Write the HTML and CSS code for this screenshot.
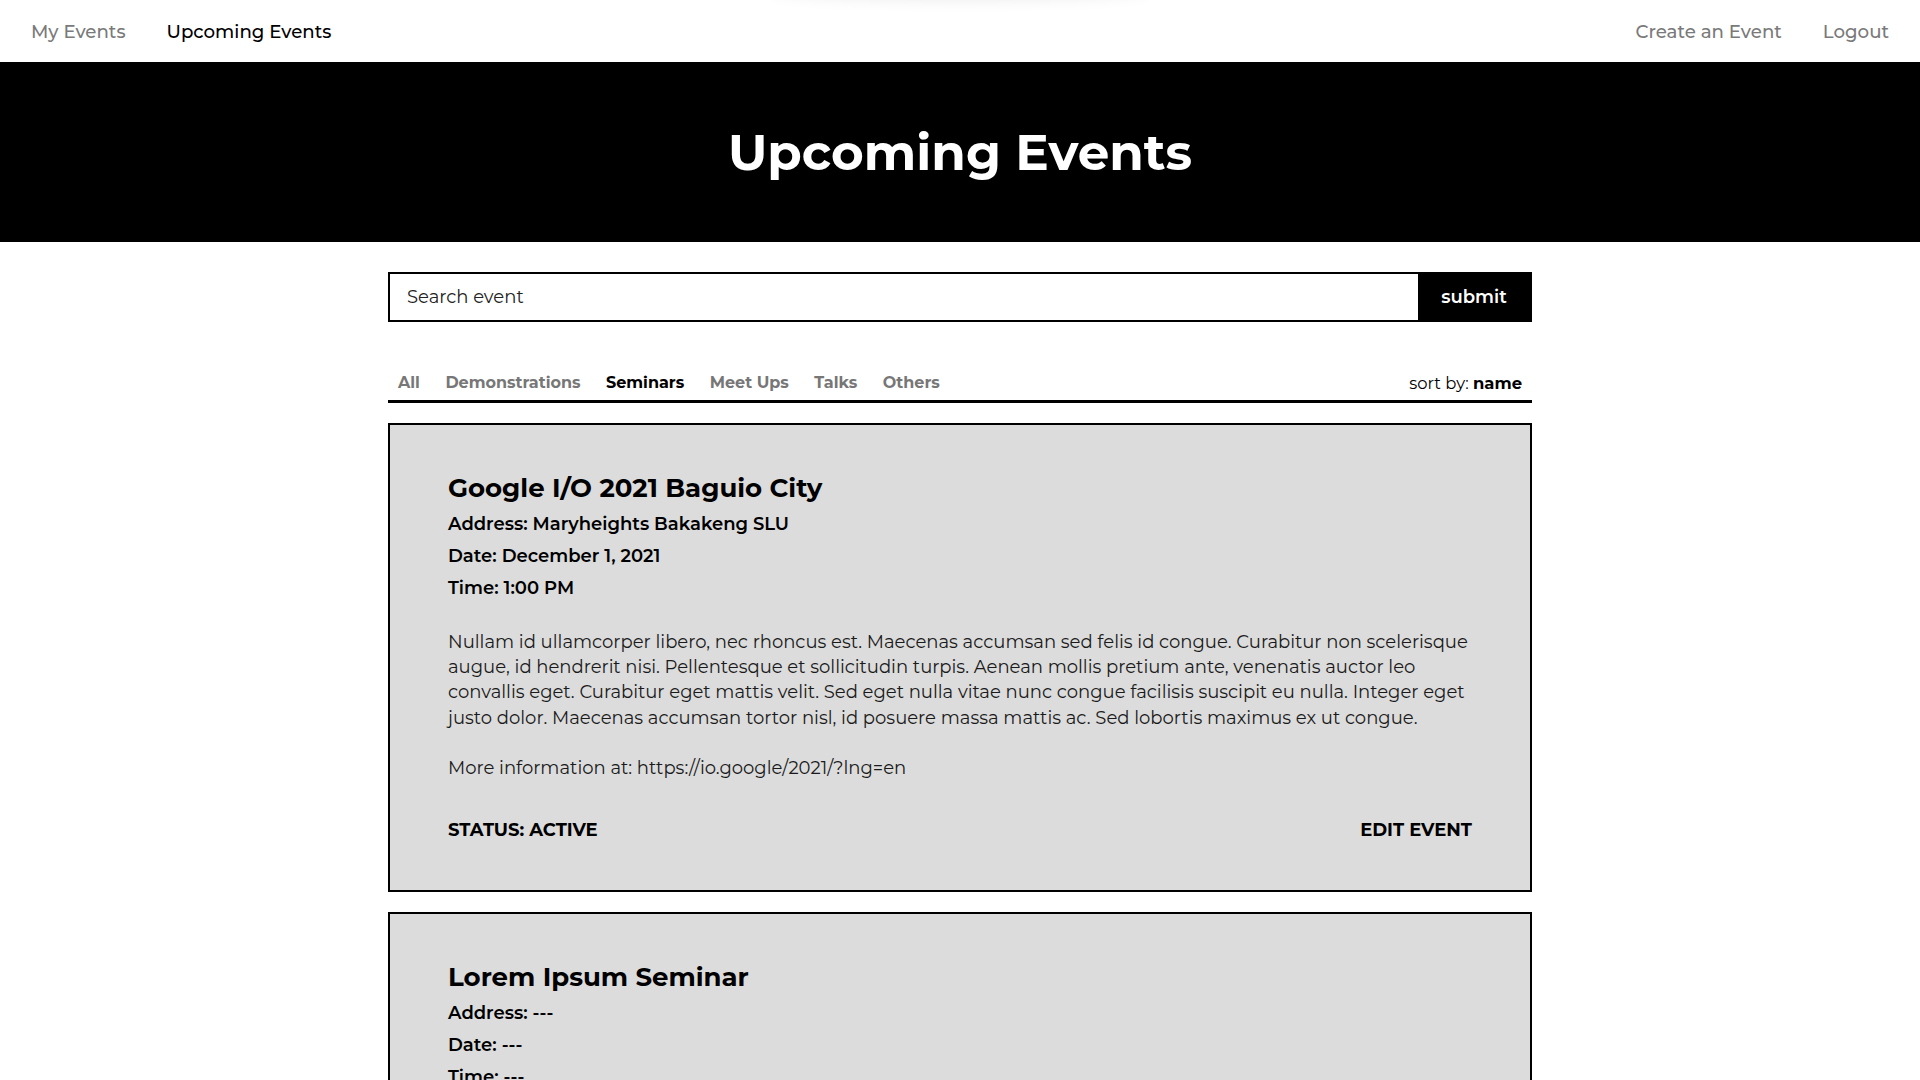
FILE: index.html
```html
<!DOCTYPE html>
<html lang="en">
<head>
<meta charset="utf-8">
<title>Upcoming Events</title>
<link rel="stylesheet" href="styles.css">
</head>
<body>
<header class="topnav">
  <div class="topnav-shadow"></div>
  <nav class="nav-group">
    <a class="nav-link" href="#">My Events</a>
    <a class="nav-link active" href="#">Upcoming Events</a>
  </nav>
  <nav class="nav-group">
    <a class="nav-link" href="#">Create an Event</a>
    <a class="nav-link" href="#">Logout</a>
  </nav>
</header>

<section class="hero">
  <h1 class="hero-title">Upcoming Events</h1>
</section>

<main class="container">
  <form class="search">
    <input class="search-input" type="text" placeholder="Search event">
    <button class="search-btn" type="button">submit</button>
  </form>

  <div class="filter-bar">
    <ul class="tabs">
      <li class="tab">All</li>
      <li class="tab">Demonstrations</li>
      <li class="tab active">Seminars</li>
      <li class="tab">Meet Ups</li>
      <li class="tab">Talks</li>
      <li class="tab">Others</li>
    </ul>
    <div class="sort">sort by: <strong>name</strong></div>
  </div>

  <article class="card">
    <h2 class="card-title">Google I/O 2021 Baguio City</h2>
    <p class="card-meta">Address: Maryheights Bakakeng SLU</p>
    <p class="card-meta">Date: December 1, 2021</p>
    <p class="card-meta">Time: 1:00 PM</p>
    <p class="card-desc">Nullam id ullamcorper libero, nec rhoncus est. Maecenas accumsan sed felis id congue. Curabitur non scelerisque augue, id hendrerit nisi. Pellentesque et sollicitudin turpis. Aenean mollis pretium ante, venenatis auctor leo convallis eget. Curabitur eget mattis velit. Sed eget nulla vitae nunc congue facilisis suscipit eu nulla. Integer eget justo dolor. Maecenas accumsan tortor nisl, id posuere massa mattis ac. Sed lobortis maximus ex ut congue.<br><br>More information at: https://io.google/2021/?lng=en</p>
    <div class="card-footer">
      <span class="status">STATUS: ACTIVE</span>
      <a class="edit" href="#">EDIT EVENT</a>
    </div>
  </article>

  <article class="card">
    <h2 class="card-title">Lorem Ipsum Seminar</h2>
    <p class="card-meta">Address: ---</p>
    <p class="card-meta">Date: ---</p>
    <p class="card-meta">Time: ---</p>
    <p class="card-desc">Lorem ipsum dolor sit amet, consectetur adipiscing elit.<br><br>More information at: ---</p>
    <div class="card-footer">
      <span class="status">STATUS: ACTIVE</span>
      <a class="edit" href="#">EDIT EVENT</a>
    </div>
  </article>
</main>
</body>
</html>
```

FILE: styles.css
```css
* { box-sizing: border-box; }

html, body {
  margin: 0;
  padding: 0;
  background: #ffffff;
  color: #000000;
  font-family: "Montserrat", "Inter", "DejaVu Sans", sans-serif;
}

a { color: inherit; text-decoration: none; }

.topnav {
  position: relative;
  height: 62px;
  display: flex;
  justify-content: space-between;
  align-items: center;
  padding: 0 31px;
  background: #fff;
  overflow: hidden;
}

.topnav-shadow {
  position: absolute;
  top: -24px;
  left: 770px;
  width: 380px;
  height: 20px;
  border-radius: 50%;
  box-shadow: 0 0 18px rgba(0, 0, 0, 0.12);
}

.nav-group {
  display: flex;
  gap: 41px;
}

.nav-link {
  font-size: 18.2px;
  font-weight: 500;
  color: #7a7a7a;
}

.nav-link.active { color: #000; }

.hero {
  height: 180px;
  background: #000;
  display: flex;
  align-items: center;
  justify-content: center;
}

.hero-title {
  margin: 0;
  color: #fff;
  font-size: 50px;
  font-weight: 700;
}

.container {
  width: 1144px;
  margin: 30px auto 0;
}

.search {
  display: flex;
  height: 50px;
  border: 2px solid #000;
  margin: 0;
}

.search-input {
  flex: 1;
  border: 0;
  outline: none;
  padding: 0 17px;
  font-family: inherit;
  font-size: 18px;
  background: #fff;
  color: #222;
}

.search-input::placeholder { color: #222; }

.search-btn {
  width: 112px;
  border: 0;
  background: #000;
  color: #fff;
  font-family: inherit;
  font-size: 18px;
  font-weight: 600;
}

.filter-bar {
  margin-top: 48px;
  display: flex;
  justify-content: space-between;
  align-items: center;
  border-bottom: 3px solid #000;
  padding: 1px 10px 5px 10px;
  height: 33px;
}

.tabs {
  list-style: none;
  margin: 0;
  padding: 0;
  display: flex;
  gap: 25.5px;
}

.tab {
  font-size: 16px;
  font-weight: 700;
  color: #777;
  line-height: 24px;
}

.tab.active { color: #000; }

.sort {
  font-size: 16.4px;
  line-height: 24px;
  color: #000;
}

.sort strong { font-weight: 700; }

.card {
  margin-top: 20px;
  background: #dcdcdc;
  border: 2px solid #000;
  padding: 48px 58px;
}

.card-title {
  margin: 0 0 2px;
  font-size: 26px;
  font-weight: 700;
  line-height: 31px;
}

.card-meta {
  margin: 8px 0 0;
  font-size: 18px;
  font-weight: 600;
  line-height: 24px;
}

.card-desc {
  margin: 30px 0 0;
  font-size: 18px;
  font-weight: 400;
  line-height: 25.2px;
  color: #1a1a1a;
}

.card-footer {
  margin-top: 37px;
  display: flex;
  justify-content: space-between;
  align-items: center;
  line-height: 24px;
  font-size: 18px;
  font-weight: 700;
}
```
